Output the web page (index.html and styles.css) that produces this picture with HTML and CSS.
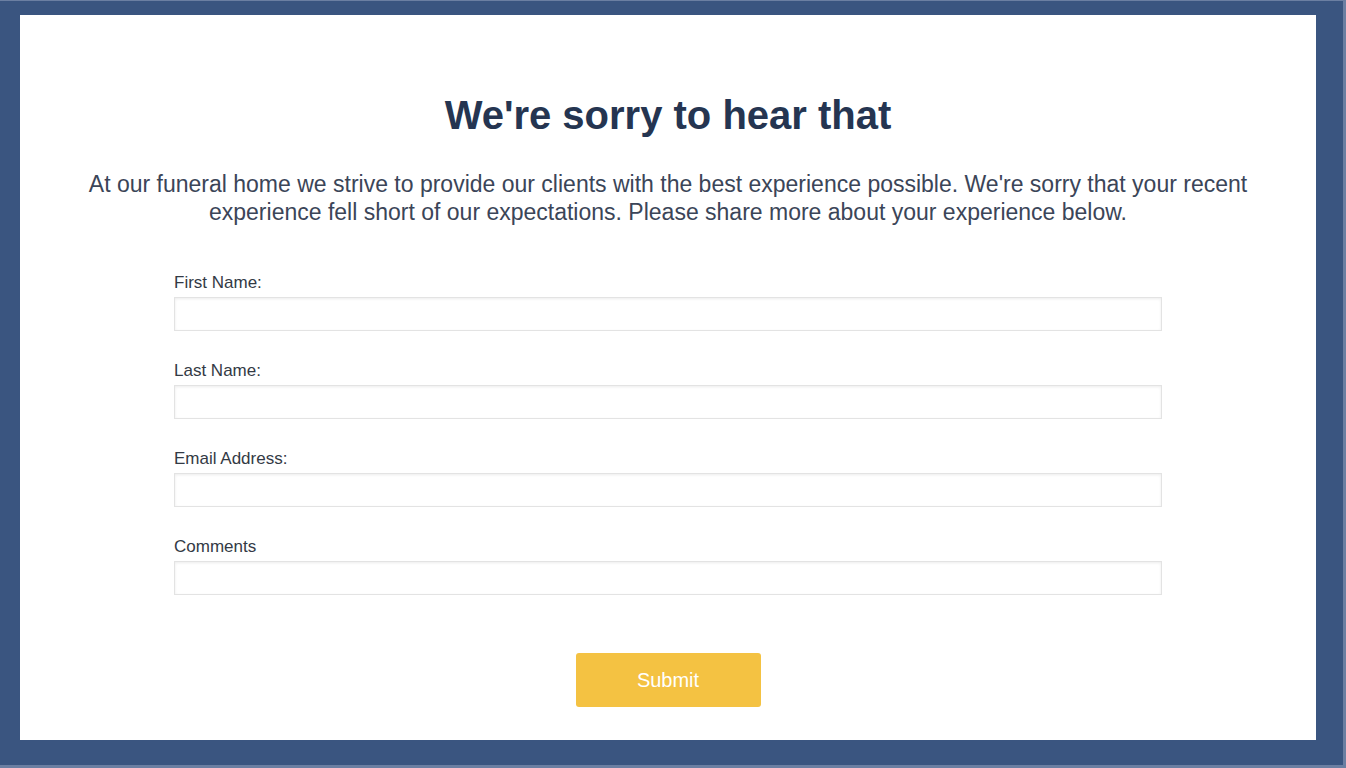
FILE: index.html
```html
<!DOCTYPE html>
<html lang="en">
<head>
<meta charset="utf-8">
<title>We're sorry to hear that</title>
<link rel="stylesheet" href="styles.css">
</head>
<body>
<div class="frame">
  <main class="card">
    <h1 class="title">We're sorry to hear that</h1>
    <p class="intro">At our funeral home we strive to provide our clients with the best experience possible. We're sorry that your recent experience fell short of our expectations. Please share more about your experience below.</p>
    <form class="form">
      <div class="field">
        <label class="label" for="first">First Name:</label>
        <input class="input" id="first" type="text">
      </div>
      <div class="field">
        <label class="label" for="last">Last Name:</label>
        <input class="input" id="last" type="text">
      </div>
      <div class="field">
        <label class="label" for="email">Email Address:</label>
        <input class="input" id="email" type="text">
      </div>
      <div class="field">
        <label class="label" for="comments">Comments</label>
        <input class="input" id="comments" type="text">
      </div>
      <div class="actions">
        <button class="submit" type="button">Submit</button>
      </div>
    </form>
  </main>
</div>
</body>
</html>
```

FILE: styles.css
```css
* { box-sizing: border-box; }
html, body {
  margin: 0;
  padding: 0;
  height: 100%;
}
body {
  background: #3a5580;
  font-family: "Liberation Sans", Arial, sans-serif;
}
.frame {
  height: 768px;
  border-top: 1px solid #6b7fa2;
  border-right: 3px solid #6b7fa2;
  border-bottom: 3px solid #6b7fa2;
  padding: 14px 27px 25px 20px;
  display: flex;
}
.card {
  flex: 1;
  background: #ffffff;
  display: flex;
  flex-direction: column;
  align-items: center;
  padding-top: 77px;
}
.title {
  margin: 0;
  font-size: 40px;
  line-height: 46px;
  font-weight: 700;
  color: #253551;
  text-align: center;
}
.intro {
  margin: 32px 0 0;
  width: 1200px;
  font-size: 23px;
  line-height: 28px;
  color: #3b4558;
  text-align: center;
}
.form {
  width: 988px;
  margin-top: 47px;
  display: flex;
  flex-direction: column;
  gap: 30px;
}
.field {
  display: flex;
  flex-direction: column;
  gap: 5px;
}
.label {
  font-size: 17px;
  line-height: 19px;
  color: #333a45;
}
.input {
  height: 34px;
  width: 100%;
  border: 1px solid #e3e3e3;
  box-shadow: inset 0 1px 3px rgba(0,0,0,0.08);
  background: #fff;
  font-family: inherit;
  font-size: 16px;
  padding: 0 8px;
}
.actions {
  display: flex;
  justify-content: center;
  margin-top: 28px;
}
.submit {
  width: 185px;
  height: 54px;
  border: none;
  border-radius: 3px;
  background: #f4c242;
  color: #ffffff;
  font-family: "Liberation Sans", Arial, sans-serif;
  font-size: 20px;
  cursor: pointer;
}
```
